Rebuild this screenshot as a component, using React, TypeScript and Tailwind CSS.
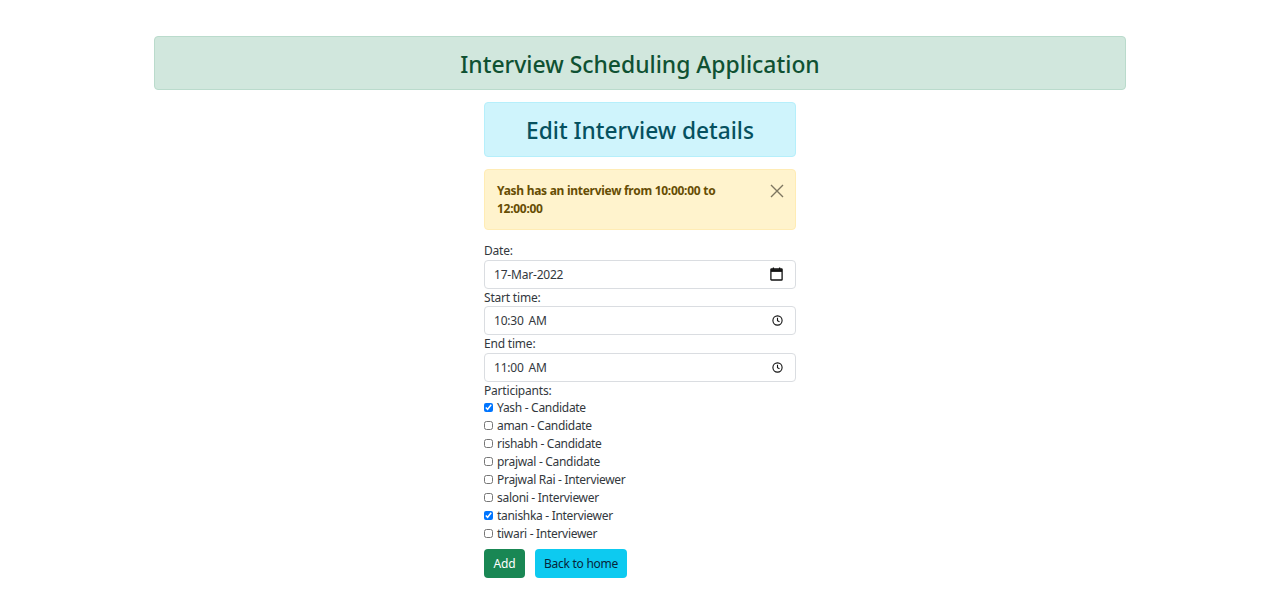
const participants = [
  { name: 'Yash - Candidate', checked: true },
  { name: 'aman - Candidate', checked: false },
  { name: 'rishabh - Candidate', checked: false },
  { name: 'prajwal - Candidate', checked: false },
  { name: 'Prajwal Rai - Interviewer', checked: false },
  { name: 'saloni - Interviewer', checked: false },
  { name: 'tanishka - Interviewer', checked: true },
  { name: 'tiwari - Interviewer', checked: false },
];

function CalendarIcon() {
  return (
    <svg width="13" height="14" viewBox="0 0 13 14" fill="none" stroke="#111" strokeWidth="1.3">
      <rect x="0.9" y="2" width="11.2" height="11" rx="0.6" />
      <path d="M0.9 3.6h11.2" strokeWidth="2.6" />
      <path d="M3.4 0.4v2M9.6 0.4v2" />
    </svg>
  );
}

function ClockIcon() {
  return (
    <svg width="11" height="11" viewBox="0 0 11 11" fill="none" stroke="#111" strokeWidth="1.1">
      <circle cx="5.5" cy="5.5" r="4.6" />
      <path d="M5.5 2.8v2.9l2 1.1" />
    </svg>
  );
}

function Field({ label, value, icon }: { label: string; value: string; icon: React.ReactNode }) {
  return (
    <div>
      <div className="h-[17.5px] leading-[17.5px] text-[12px] tracking-[-0.2px] text-[#33383d]">{label}</div>
      <div className="h-[29px] flex items-center justify-between pl-[9px] pr-[12px] border border-[#dadde1] rounded bg-white text-[12px] tracking-[-0.2px] text-[#33383d]">
        <span className="pt-px [word-spacing:2px]">{value}</span>
        {icon}
      </div>
    </div>
  );
}

export default function App() {
  return (
    <div className="min-h-[600px] bg-white pt-9 font-['Noto_Sans','Open_Sans',sans-serif]">
      <div className="w-[972px] mx-auto h-[54px] pt-[4px] flex items-center justify-center rounded border border-[#badbcc] bg-[#d1e7dd] text-[#0f5132] text-[22.9px] font-medium">
        Interview Scheduling Application
      </div>
      <div className="w-[312px] mx-auto mt-3">
        <div className="h-[55px] pt-[3px] flex items-center justify-center rounded border border-[#b6effb] bg-[#cff4fc] text-[#055160] text-[22.7px] font-medium">
          Edit Interview details
        </div>
        <div className="relative h-[61px] mt-3 rounded border border-[#ffecb5] bg-[#fff3cd] text-[#664d03] text-[12px] tracking-[-0.28px] font-bold leading-[18px] pl-3 pr-12 pt-3">
          Yash has an interview from 10:00:00 to 12:00:00
          <svg className="absolute right-[11px] top-[14px]" width="14" height="14" viewBox="0 0 14 14" stroke="#7d7660" strokeWidth="1.4">
            <path d="M1 1l12 12M13 1L1 13" />
          </svg>
        </div>
        <div className="mt-3">
          <Field label="Date:" value="17-Mar-2022" icon={<CalendarIcon />} />
          <Field label="Start time:" value="10:30 AM" icon={<ClockIcon />} />
          <Field label="End time:" value="11:00 AM" icon={<ClockIcon />} />
        </div>
        <div className="h-[18px] leading-[18px] text-[12px] tracking-[-0.2px] text-[#33383d]">Participants:</div>
        {participants.map((p) => (
          <label key={p.name} className="flex items-center h-[18px] pb-[1px] text-[12px] tracking-[-0.3px] text-[#33383d]">
            <input type="checkbox" defaultChecked={p.checked} className="w-[9px] h-[9px] mr-[4px] mb-[1px] accent-[#0075ff]" />
            {p.name}
          </label>
        ))}
        <div className="flex gap-[10px] mt-[5px]">
          <button className="h-[29px] w-[41px] pt-px rounded bg-[#198754] text-white text-[12px] tracking-[-0.2px]">Add</button>
          <button className="h-[29px] w-[92px] pt-px rounded bg-[#0dcaf0] text-[#06263a] text-[12px] tracking-[-0.25px]">Back to home</button>
        </div>
      </div>
    </div>
  );
}
